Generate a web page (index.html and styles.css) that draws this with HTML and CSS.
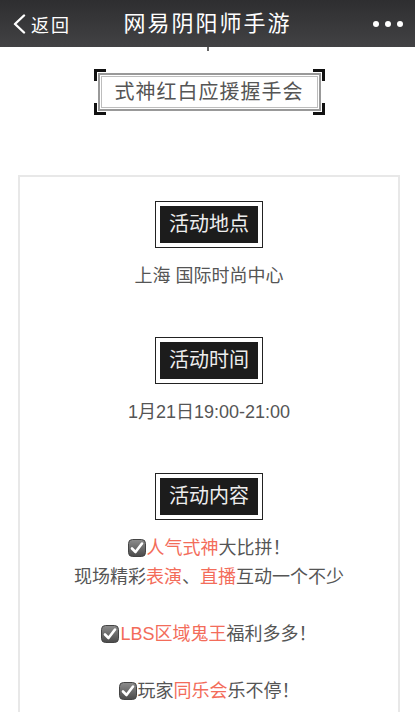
FILE: index.html
```html
<!DOCTYPE html>
<html lang="zh-CN">
<head>
  <meta charset="UTF-8" />
  <meta name="viewport" content="width=device-width, initial-scale=1.0"/>
  <title>网易阴阳师手游</title>
  <link rel="stylesheet" href="styles.css">
</head>
<body>
  <header class="topbar">
    <a class="back" href="#">
      <svg class="chevron" width="14" height="20" viewBox="0 0 14 20"><path d="M12 1.5 L3 10 L12 18.5" fill="none" stroke="#fff" stroke-width="2.4" stroke-linecap="round" stroke-linejoin="round"/></svg>
      <span>返回</span>
    </a>
    <h1 class="title">网易阴阳师手游</h1>
    <div class="more"><i></i><i></i><i></i></div>
  </header>
  <div class="tick"></div>

  <div class="banner">
    <div class="frame">
      <span class="corner tl"></span><span class="corner tr"></span>
      <span class="corner bl"></span><span class="corner br"></span>
      <div class="frame-box">式神红白应援握手会</div>
    </div>
  </div>

  <div class="card">
    <section class="block">
      <div class="label"><span>活动地点</span></div>
      <p>上海 国际时尚中心</p>
    </section>

    <section class="block">
      <div class="label"><span>活动时间</span></div>
      <p>1月21日19:00-21:00</p>
    </section>

    <section class="block">
      <div class="label"><span>活动内容</span></div>
      <p><svg class="check" width="18" height="18" viewBox="0 0 18 18"><defs><linearGradient id="cg" x1="0" y1="0" x2="0" y2="1"><stop offset="0" stop-color="#8d8d8d"/><stop offset="1" stop-color="#4a4a4a"/></linearGradient></defs><rect x="0.5" y="0.5" width="17" height="17" rx="4" fill="url(#cg)" stroke="#444"/><path d="M4 9.5 L7.5 13 L14 4.5" fill="none" stroke="#fff" stroke-width="2.6" stroke-linecap="round" stroke-linejoin="round"/></svg><em>人气式神</em>大比拼！<br>现场精彩<em>表演</em>、<em>直播</em>互动一个不少</p>
      <p><svg class="check" width="18" height="18" viewBox="0 0 18 18"><rect x="0.5" y="0.5" width="17" height="17" rx="4" fill="url(#cg)" stroke="#444"/><path d="M4 9.5 L7.5 13 L14 4.5" fill="none" stroke="#fff" stroke-width="2.6" stroke-linecap="round" stroke-linejoin="round"/></svg><em>LBS区域鬼王</em>福利多多！</p>
      <p><svg class="check" width="18" height="18" viewBox="0 0 18 18"><rect x="0.5" y="0.5" width="17" height="17" rx="4" fill="url(#cg)" stroke="#444"/><path d="M4 9.5 L7.5 13 L14 4.5" fill="none" stroke="#fff" stroke-width="2.6" stroke-linecap="round" stroke-linejoin="round"/></svg>玩家<em>同乐会</em>乐不停！</p>
    </section>
  </div>
</body>
</html>
```

FILE: styles.css
```css
body { margin: 0; background: #fff; color: #555; font-family: "Liberation Sans", "Noto Sans CJK SC", sans-serif; }

.topbar { height: 47px; display: grid; grid-template-columns: 1fr auto 1fr; align-items: center; background: linear-gradient(#2e2e30, #424244); color: #fff; }
.back { display: flex; align-items: center; gap: 5px; padding-left: 12px; color: #fff; text-decoration: none; font-size: 18px; letter-spacing: 2px; }
.title { margin: 0; font-size: 22px; font-weight: normal; letter-spacing: 2px; line-height: 47px; }
.more { display: flex; justify-content: flex-end; gap: 6px; padding-right: 12px; }
.more i { width: 6px; height: 6px; border-radius: 50%; background: #fff; }

.tick { width: 2px; height: 4px; margin: 0 auto; background: #666; }

.banner { margin: 18px 15px 0 18px; display: flex; justify-content: center; }
.frame { position: relative; padding: 4px; }
.frame-box { border: 2px solid #999; box-shadow: inset 0 0 0 1px #fff, inset 0 0 0 2px #bdbdbd; padding: 3px 15px; font-size: 20px; line-height: 28px; letter-spacing: 1px; color: #555; }
.corner { position: absolute; width: 9px; height: 9px; border: 0 solid #111; }
.tl { top: 0; left: 0; border-top-width: 3px; border-left-width: 3px; }
.tr { top: 0; right: 0; border-top-width: 3px; border-right-width: 3px; }
.bl { bottom: 0; left: 0; border-bottom-width: 3px; border-left-width: 3px; }
.br { bottom: 0; right: 0; border-bottom-width: 3px; border-right-width: 3px; }

.card { margin: 60px 15px 0 18px; border: 2px solid #e8e8e8; border-bottom: 0; padding-top: 24px; text-align: center; min-height: 560px; }
.block { display: flex; flex-direction: column; align-items: center; margin-bottom: 46.5px; }
.label { border: 1px solid #222; padding: 4px; }
.label span { display: block; background: #1c1c1c; color: #eee; font-size: 20px; line-height: 37px; padding: 0 9px; }
.block p { margin: 14px 0 0; font-size: 18px; line-height: 28.5px; }
.block p + p { margin-top: 28.5px; }
.block em { font-style: normal; color: #f36c5a; }
.check { vertical-align: -3px; margin-right: 1px; }
```
